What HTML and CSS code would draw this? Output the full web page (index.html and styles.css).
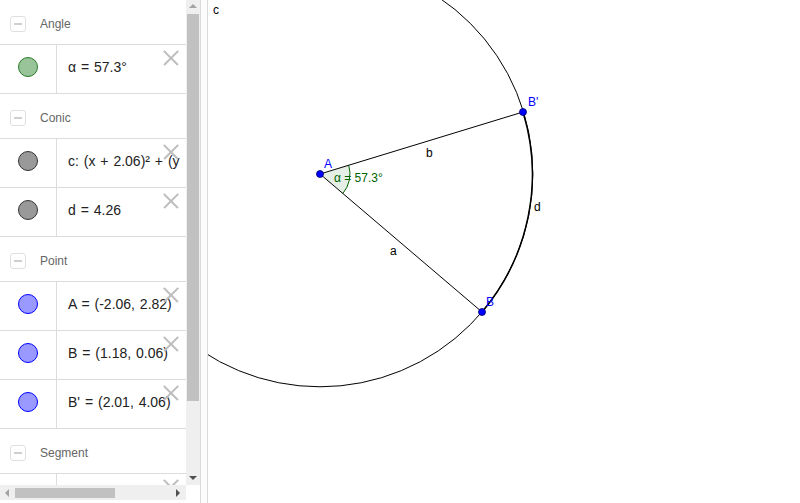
FILE: index.html
```html
<!DOCTYPE html>
<html>
<head>
<meta charset="utf-8">
<link rel="stylesheet" href="styles.css">
</head>
<body>
<div class="app">
  <div class="algebra">
    <div class="list">
      <div class="group"><span class="toggle"></span><span class="gname">Angle</span></div>
      <div class="item">
        <div class="mark"><span class="dot dot-green"></span></div>
        <div class="val">α = 57.3°</div>
        <span class="del"></span>
      </div>
      <div class="group"><span class="toggle"></span><span class="gname">Conic</span></div>
      <div class="item">
        <div class="mark"><span class="dot dot-gray"></span></div>
        <div class="val">c: (x + 2.06)² + (y</div>
        <span class="del"></span>
      </div>
      <div class="item">
        <div class="mark"><span class="dot dot-gray"></span></div>
        <div class="val">d = 4.26</div>
        <span class="del"></span>
      </div>
      <div class="group"><span class="toggle"></span><span class="gname">Point</span></div>
      <div class="item">
        <div class="mark"><span class="dot dot-blue"></span></div>
        <div class="val">A = (-2.06, 2.82)</div>
        <span class="del"></span>
      </div>
      <div class="item">
        <div class="mark"><span class="dot dot-blue"></span></div>
        <div class="val">B = (1.18, 0.06)</div>
        <span class="del"></span>
      </div>
      <div class="item">
        <div class="mark"><span class="dot dot-blue"></span></div>
        <div class="val">B' = (2.01, 4.06)</div>
        <span class="del"></span>
      </div>
      <div class="group"><span class="toggle"></span><span class="gname">Segment</span></div>
      <div class="item">
        <div class="mark"></div>
        <div class="val"></div>
        <span class="del"></span>
      </div>
    </div>
    <div class="vscroll">
      <span class="arr arr-up"></span>
      <span class="vthumb"></span>
      <span class="arr arr-down"></span>
    </div>
    <div class="hscroll">
      <span class="arr arr-left"></span>
      <span class="hthumb"></span>
      <span class="arr arr-right"></span>
    </div>
    <div class="corner"></div>
  </div>
  <div class="splitter"></div>
  <div class="canvas">
    <svg class="plot" viewBox="208 0 592 503" width="592" height="503">
      <circle cx="320" cy="174" r="212.8" fill="none" stroke="#000" stroke-width="1"/>
      <path d="M320 174 L348.69 165.24 A30 30 0 0 1 342.84 193.45 Z" fill="rgba(0,100,0,0.1)" stroke="none"/>
      <path d="M348.69 165.24 A30 30 0 0 1 342.84 193.45" fill="none" stroke="#006400" stroke-width="1"/>
      <line x1="320" y1="174" x2="482" y2="312" stroke="#000" stroke-width="1"/>
      <line x1="320" y1="174" x2="523" y2="112" stroke="#000" stroke-width="1"/>
      <path d="M482 312 A212.8 212.8 0 0 0 523 112" fill="none" stroke="#000" stroke-width="1.5"/>
      <circle cx="320" cy="174" r="3.5" fill="#0000ff" stroke="#000066" stroke-width="0.8"/>
      <circle cx="482" cy="312" r="3.5" fill="#0000ff" stroke="#000066" stroke-width="0.8"/>
      <circle cx="523" cy="112" r="3.5" fill="#0000ff" stroke="#000066" stroke-width="0.8"/>
      <text class="lbl lbl-pt" x="324" y="168">A</text>
      <text class="lbl lbl-pt" x="528" y="106">B'</text>
      <text class="lbl lbl-pt" x="486" y="306">B</text>
      <text class="lbl lbl-ang" x="334" y="182">α = 57.3°</text>
      <text class="lbl" x="426" y="157">b</text>
      <text class="lbl" x="390" y="255">a</text>
      <text class="lbl" x="534" y="211">d</text>
      <text class="lbl" x="213" y="14">c</text>
    </svg>
  </div>
</div>
</body>
</html>
```

FILE: styles.css
```css
html, body {
  margin: 0;
  padding: 0;
  background: #fff;
  overflow: hidden;
}
body {
  font-family: "Liberation Sans", Arial, sans-serif;
}
.app {
  display: flex;
  width: 800px;
  height: 503px;
}
.algebra {
  width: 200px;
  height: 503px;
  display: grid;
  grid-template-columns: 186px 14px;
  grid-template-rows: 485px 15px 3px;
}
.list {
  overflow: hidden;
  background: #fff;
}
.group {
  height: 44px;
  border-bottom: 1px solid #dcdcdc;
  display: flex;
  align-items: flex-start;
  box-sizing: content-box;
}
.toggle {
  width: 14px;
  height: 14px;
  margin: 16px 0 0 10px;
  border: 1px solid #e0e0e0;
  border-radius: 3px;
  position: relative;
  flex: none;
}
.toggle::after {
  content: "";
  position: absolute;
  left: 3px;
  top: 6px;
  width: 8px;
  height: 2px;
  background: #cfcfcf;
}
.gname {
  margin: 16px 0 0 14px;
  font-size: 12px;
  line-height: 16px;
  color: #666;
}
.item {
  position: relative;
  height: 48px;
  border-bottom: 1px solid #dcdcdc;
  display: flex;
}
.mark {
  width: 57px;
  flex: none;
  border-right: 1px solid #dcdcdc;
  box-sizing: border-box;
  display: flex;
  justify-content: center;
  padding-top: 12px;
}
.dot {
  width: 18px;
  height: 18px;
  border-radius: 50%;
  border: 1px solid #333;
}
.dot-green {
  background: #99c499;
  border-color: #2a7a2a;
}
.dot-gray {
  background: #999;
  border-color: #333;
}
.dot-blue {
  background: #9999ff;
  border-color: #0000ff;
}
.val {
  padding: 12px 0 0 11px;
  font-size: 14px;
  line-height: 20px;
  word-spacing: 1px;
  color: #222;
  white-space: nowrap;
}
.del {
  position: absolute;
  left: 163px;
  top: 5px;
  width: 16px;
  height: 16px;
}
.del::before,
.del::after {
  content: "";
  position: absolute;
  left: -2px;
  top: 7px;
  width: 20px;
  height: 1.5px;
  background: #bdbdbd;
  transform: rotate(45deg);
}
.del::after {
  transform: rotate(-45deg);
}
.vscroll {
  position: relative;
  background: #efefef;
}
.vthumb {
  position: absolute;
  left: 1px;
  top: 14px;
  width: 12px;
  height: 387px;
  background: #c1c1c1;
}
.arr {
  position: absolute;
  width: 0;
  height: 0;
}
.arr-up {
  left: 3px;
  top: 4px;
  border-left: 4px solid transparent;
  border-right: 4px solid transparent;
  border-bottom: 4px solid #a3a3a3;
}
.arr-down {
  left: 3px;
  top: 476px;
  border-left: 4px solid transparent;
  border-right: 4px solid transparent;
  border-top: 4px solid #505050;
}
.hscroll {
  position: relative;
  background: #efefef;
}
.hthumb {
  position: absolute;
  left: 15px;
  top: 3px;
  width: 100px;
  height: 10px;
  background: #c1c1c1;
}
.arr-left {
  left: 5px;
  top: 4px;
  border-top: 4px solid transparent;
  border-bottom: 4px solid transparent;
  border-right: 4px solid #a3a3a3;
}
.arr-right {
  left: 176px;
  top: 4px;
  border-top: 4px solid transparent;
  border-bottom: 4px solid transparent;
  border-left: 4px solid #505050;
}
.corner {
  background: #fff;
}
.splitter {
  width: 8px;
  height: 503px;
  box-sizing: border-box;
  border-left: 1px solid #dadada;
  border-right: 1px solid #dadada;
  background: #fcfcfc;
}
.canvas {
  flex: 1;
  height: 503px;
  overflow: hidden;
}
.plot {
  display: block;
}
.lbl {
  font-family: "Liberation Sans", Arial, sans-serif;
  font-size: 12px;
  fill: #000;
}
.lbl-pt {
  fill: #0000ff;
}
.lbl-ang {
  fill: #006400;
}
```
